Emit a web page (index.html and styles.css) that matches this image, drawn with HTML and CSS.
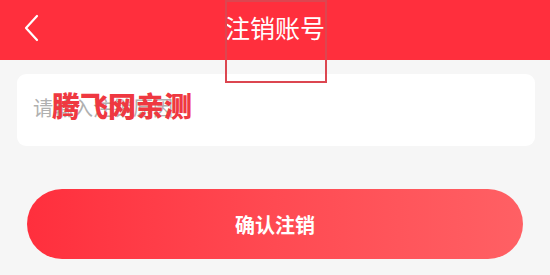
FILE: index.html
```html
<!DOCTYPE html>
<html lang="zh">
<head>
<meta charset="utf-8">
<link rel="stylesheet" href="styles.css">
</head>
<body>
<header class="nav">
  <span class="back">
    <svg width="16" height="28" viewBox="0 0 16 28"><path d="M14 2 L3 14 L14 26" fill="none" stroke="#fff" stroke-width="2.2" stroke-linecap="round" stroke-linejoin="round"/></svg>
  </span>
  <h1 class="title">注销账号</h1>
</header>
<div class="frame"></div>
<main class="content">
  <div class="card">
    <input class="field" type="text" placeholder="请输入注销原因">
    <span class="mark">腾飞网亲测</span>
  </div>
  <button class="submit">确认注销</button>
</main>
</body>
</html>
```

FILE: styles.css
```css
* { box-sizing: border-box; }
html, body {
  margin: 0;
  padding: 0;
  background: #f6f6f6;
  font-family: "Noto Sans CJK SC", "Noto Sans", sans-serif;
  width: 550px;
  height: 275px;
  overflow: hidden;
}
.nav {
  height: 60px;
  background: #ff2f3d;
  display: flex;
  align-items: center;
  justify-content: center;
  position: relative;
}
.back {
  position: absolute;
  left: 23px;
  top: 14px;
  display: flex;
}
.title {
  margin: 0 0 6px 0;
  color: #fff;
  font-size: 25px;
  font-weight: 400;
  line-height: 1;
  letter-spacing: 0;
}
.frame {
  position: absolute;
  z-index: 5;
  left: 225px;
  top: 0;
  width: 102px;
  height: 83px;
  border: 2px solid #dc4650;
}
.content {
  padding: 14px 15px 0 17px;
}
.card {
  position: relative;
  height: 72px;
  background: #fff;
  border-radius: 9px;
  display: flex;
  align-items: center;
  padding-left: 16px;
}
.field {
  border: none;
  outline: none;
  background: transparent;
  font-family: inherit;
  font-size: 20px;
  color: #333;
  width: 100%;
  padding: 0;
  margin-top: -6px;
}
.field::placeholder { color: #b0b0b0; }
.mark {
  position: absolute;
  left: 35px;
  top: 15px;
  font-size: 28px;
  font-weight: 900;
  color: #ef3841;
  letter-spacing: 0;
  line-height: 1.2;
}
.submit {
  display: block;
  margin: 43px 0 0 10px;
  width: 496px;
  height: 70px;
  border: none;
  border-radius: 35px;
  background: linear-gradient(90deg, #ff2f3d 0%, #ff4a52 50%, #ff6064 100%);
  color: #fff;
  font-family: inherit;
  font-size: 20px;
  font-weight: 700;
  padding: 0;
}
```
